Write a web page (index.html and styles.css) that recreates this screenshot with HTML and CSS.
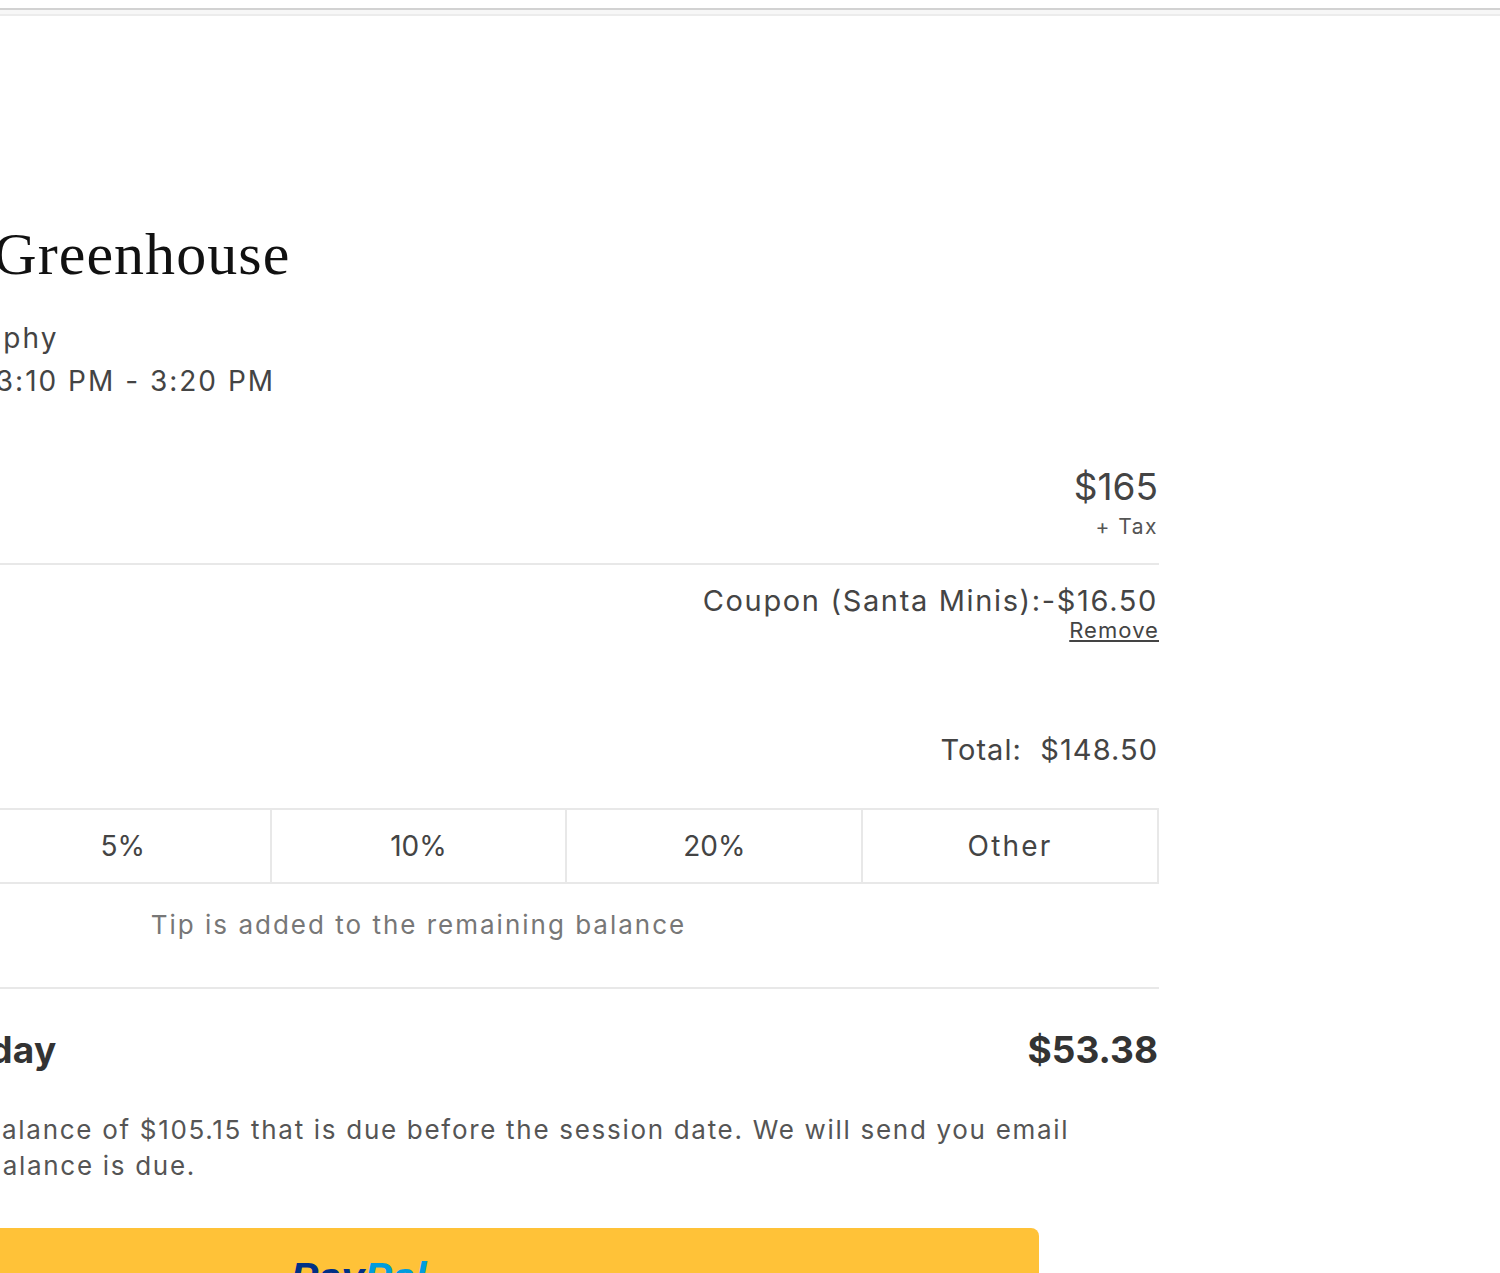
FILE: index.html
```html
<!DOCTYPE html>
<html lang="en">
<head>
    <meta charset="UTF-8">
    <meta name="viewport" content="width=device-width, initial-scale=1.0">
    <title>Checkout</title>
    <link rel="stylesheet" href="styles.css">
</head>
<body>
    <div class="top-bar"></div>
    <div class="checkout">
        <h1 class="session-title">Minis at the Greenhouse</h1>
        <p class="session-brand">Lemon Tree Photography</p>
        <p class="session-time">December 22, 2024, 3:10 PM - 3:20 PM</p>

        <div class="price-row">
            <div class="price">$165</div>
            <div class="price-tax">+ Tax</div>
        </div>
        <div class="coupon-row">
            <div class="coupon">Coupon (Santa Minis):-$16.50</div>
            <a class="coupon-remove" href="#">Remove</a>
        </div>
        <div class="total-row">Total:&nbsp; $148.50</div>

        <div class="tip-options">
            <button>None</button>
            <button>5%</button>
            <button>10%</button>
            <button>20%</button>
            <button class="tip-other">Other</button>
        </div>
        <p class="tip-note">Tip is added to the remaining balance</p>

        <div class="due-row">
            <span class="due-label">Deposit Owed Today</span>
            <span>$53.38</span>
        </div>
        <p class="due-note">You have a remaining balance of $105.15 that is due before the session date. We will send you email reminders before this balance is due.</p>

        <button class="paypal-btn"><span class="pp-dark">Pay</span><span class="pp-light">Pal</span></button>
    </div>
</body>
</html>
```

FILE: styles.css
```css
html, body {
    height: 100%;
}

body {
    margin: 0;
    overflow: hidden;
    background: #fff;
    font-family: Inter, "Liberation Sans", sans-serif;
    color: #444;
}

.top-bar {
    height: 8px;
    margin-top: 8px;
    border-top: 2px solid #d2d2d2;
    border-bottom: 2px solid #ececec;
    background: #f7f7f7;
    box-sizing: border-box;
}

.checkout {
    width: 1481px;
    margin-left: -322px;
    padding-top: 206px;
}

.session-title {
    margin: 0;
    font-family: "Liberation Serif", serif;
    font-weight: 400;
    font-size: 60px;
    line-height: 64px;
    letter-spacing: 1.05px;
    color: #111;
}

.session-brand,
.session-time {
    margin: 0;
    font-size: 28px;
    line-height: 43px;
    letter-spacing: 2px;
}

.session-brand {
    margin-top: 31px;
    letter-spacing: 2.1px;
}

.price-row {
    margin-top: 62px;
    padding-bottom: 22px;
    padding-right: 1px;
    border-bottom: 2px solid #e8e8e8;
    text-align: right;
}

.price {
    font-size: 37px;
    line-height: 44px;
}

.price-tax {
    margin-top: 4px;
    font-size: 21px;
    line-height: 28px;
    letter-spacing: 1.5px;
    color: #555;
}

.coupon-row {
    padding-top: 17px;
    text-align: right;
}

.coupon {
    padding-right: 1px;
    font-size: 29px;
    line-height: 38px;
    letter-spacing: 1.65px;
}

.coupon-remove {
    display: block;
    margin-top: -1px;
    font-size: 22px;
    line-height: 22px;
    letter-spacing: 1.05px;
    color: #444;
}

.total-row {
    margin-top: 90px;
    padding-right: 1px;
    font-size: 29px;
    line-height: 38px;
    letter-spacing: 1.05px;
    text-align: right;
}

.tip-options {
    display: grid;
    grid-template-columns: repeat(5, 1fr);
    margin: 39px 0 0 -2px;
    border: 2px solid #e8e8e8;
    box-sizing: border-box;
}

.tip-options button {
    height: 72px;
    padding: 0;
    border: none;
    border-left: 2px solid #e8e8e8;
    background: #fff;
    font-family: inherit;
    font-size: 28px;
    color: #444;
}

.tip-options button:first-child {
    border-left: none;
}

.tip-options .tip-other {
    letter-spacing: 2.2px;
}

.tip-note {
    margin: 23px 0 0;
    font-size: 26px;
    line-height: 36px;
    letter-spacing: 2px;
    color: #777;
    text-align: center;
}

.due-row {
    display: flex;
    justify-content: space-between;
    margin-top: 44px;
    padding: 37px 1px 0 0;
    border-top: 2px solid #e8e8e8;
    font-size: 37px;
    font-weight: 700;
    line-height: 48px;
    color: #333;
}

.due-label {
    letter-spacing: 0.35px;
}

.due-note {
    margin: 38px 0 0;
    width: 1400px;
    font-size: 26px;
    line-height: 36px;
    letter-spacing: 1.7px;
    color: #555;
}

.paypal-btn {
    display: block;
    width: 1361px;
    height: 98px;
    margin-top: 44px;
    padding: 0;
    border: none;
    border-radius: 8px;
    background: #ffc238;
    font-family: "Liberation Sans", sans-serif;
    font-size: 41.5px;
    font-weight: 700;
    font-style: italic;
}

.pp-dark {
    color: #003087;
}

.pp-light {
    color: #009cde;
}
```
